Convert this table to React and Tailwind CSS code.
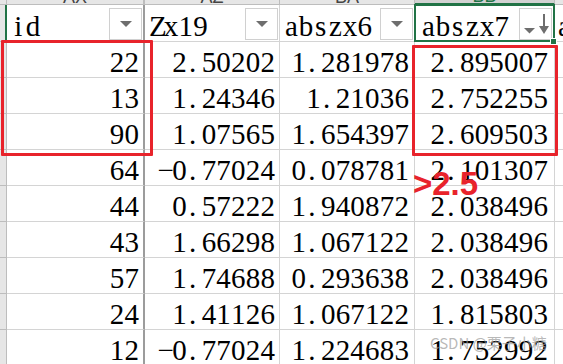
import React from 'react';

const rows = [
  ['22', '2.50202', '1.281978', '2.895007'],
  ['13', '1.24346', '1.21036', '2.752255'],
  ['90', '1.07565', '1.654397', '2.609503'],
  ['64', '−0.77024', '0.078781', '2.101307'],
  ['44', '0.57222', '1.940872', '2.038496'],
  ['43', '1.66298', '1.067122', '2.038496'],
  ['57', '1.74688', '0.293638', '2.038496'],
  ['24', '1.41126', '1.067122', '1.815803'],
  ['12', '−0.77024', '1.224683', '1.752992'],
];

function Mono({ text }) {
  return (
    <span className="inline-flex whitespace-nowrap font-['Liberation_Serif']">
      {Array.from(text).map((ch, i) => (
        <span
          key={i}
          className={ch === '.' ? 'inline-block w-[14.7px] text-left pl-[2px]' : 'inline-block w-[14.7px] text-center'}
        >
          {ch}
        </span>
      ))}
    </span>
  );
}

function FilterBtn() {
  return (
    <div className="ml-auto mr-[1px] mb-[1px] self-end w-[33px] h-[32px] shrink-0 border border-[#d0d0d0] bg-white flex items-center justify-center">
      <svg width="12" height="6" viewBox="0 0 12 6">
        <path d="M0 0 L12 0 L6 6 Z" fill="#6e6e6e" />
      </svg>
    </div>
  );
}

function SortBtn() {
  return (
    <div className="ml-auto mr-[2px] mb-[1px] self-end w-[33px] h-[32px] shrink-0 border border-[#d0d0d0] bg-white">
      <svg width="31" height="30" viewBox="0 0 31 30">
        <path d="M4 19 L15 19 L9.5 24.5 Z" fill="#6e6e6e" />
        <rect x="23" y="5" width="2" height="16" fill="#6e6e6e" />
        <path d="M19 17 L29 17 L24 25 Z" fill="#6e6e6e" />
      </svg>
    </div>
  );
}

const letterStrip = 'h-[5px] overflow-hidden flex items-end justify-center bg-[#e6e6e6] border-b border-r border-[#bdbdbd]';
const letter = "font-['Liberation_Sans'] text-[18px] leading-none text-[#444] mb-[-2px]";

export default function App() {
  return (
    <div className="relative w-[563px] h-[364px] overflow-hidden bg-white font-['Liberation_Serif'] text-black">
      <div className="grid grid-cols-[7px_138px_135px_135px_140px_1fr] grid-rows-[5px_37px_repeat(9,36px)]">
        <div className="bg-[#e6e6e6] border-b border-r border-[#bdbdbd]" />
        <div className="h-[5px] overflow-hidden flex items-end justify-center bg-[#e6e6e6] border-b border-r-2 border-[#bdbdbd]">
          <span className={letter}>AX</span>
        </div>
        <div className={letterStrip}>
          <span className={letter}>AZ</span>
        </div>
        <div className={letterStrip}>
          <span className={letter}>BA</span>
        </div>
        <div className="h-[5px] overflow-hidden flex items-end justify-center bg-[#d2d2d2] border-b-2 border-r border-b-[#217346] border-r-[#bdbdbd]">
          <span className="font-['Liberation_Sans'] text-[18px] leading-none text-[#217346] mb-[-2px]">BB</span>
        </div>
        <div className="bg-[#e6e6e6] border-b border-[#bdbdbd]" />

        <div className="bg-[#e6e6e6] border-b border-b-[#bdbdbd] border-r-2 border-r-[#217346]" />
        <div className="flex items-end pl-[4px] border-b border-r-2 border-b-[#d4d4d4] border-r-[#9c9c9c] text-[29px] leading-[29px]">
          <Mono text="id" />
          <FilterBtn />
        </div>
        <div className="flex items-end pl-[4px] border-b border-r border-[#d4d4d4] text-[29px] leading-[29px]">
          <Mono text="Zx19" />
          <FilterBtn />
        </div>
        <div className="flex items-end pl-[4px] border-b border-r border-[#d4d4d4] text-[29px] leading-[29px]">
          <Mono text="abszx6" />
          <FilterBtn />
        </div>
        <div className="relative flex items-end pl-[6px] border-b border-r border-[#d4d4d4] text-[29px] leading-[29px]">
          <Mono text="abszx7" />
          <SortBtn />
          <div className="absolute -inset-[1px] border-2 border-[#217346]" />
          <div className="absolute -right-[3px] -bottom-[4px] w-[7px] h-[7px] bg-[#217346] border border-white" />
        </div>
        <div className="flex items-end pl-[2px] border-b border-[#d4d4d4] text-[29px] leading-[29px] overflow-hidden whitespace-nowrap">
          <Mono text="abszx8" />
        </div>

        {rows.map((r, i) => (
          <React.Fragment key={i}>
            <div className="bg-[#e6e6e6] border-b border-r border-[#bdbdbd]" />
            <div className="flex items-end justify-end pr-[4px] border-b border-r-2 border-b-[#d4d4d4] border-r-[#9c9c9c] text-[29px] leading-[29px]">
              <Mono text={r[0]} />
            </div>
            <div className="flex items-end justify-end pr-[4px] border-b border-r border-[#d4d4d4] text-[29px] leading-[29px]">
              <Mono text={r[1]} />
            </div>
            <div className="flex items-end justify-end pr-[5px] border-b border-r border-[#d4d4d4] text-[29px] leading-[29px]">
              <Mono text={r[2]} />
            </div>
            <div className="flex items-end justify-end pr-[6px] border-b border-r border-[#d4d4d4] text-[29px] leading-[29px]">
              <Mono text={r[3]} />
            </div>
            <div className="border-b border-[#d4d4d4]" />
          </React.Fragment>
        ))}
      </div>

      <div className="absolute left-[1px] top-[40px] w-[152px] h-[116px] border-[3px] border-[#e8232b] rounded-[1px]" />
      <div className="absolute left-[412px] top-[45px] w-[146px] h-[111px] border-[3px] border-[#e8232b] rounded-[1px]" />
      <div className="absolute left-[413px] top-[167px] font-['Liberation_Sans'] font-bold text-[33px] leading-none text-[#e8232b] whitespace-nowrap">
        &gt;2.5
      </div>

      <div className="absolute left-[430px] top-[335px] font-['Noto_Sans_CJK_SC'] text-[15px] leading-none text-[#9a9a9a]/70 whitespace-nowrap">
        CSDN @栗子小糖
      </div>
    </div>
  );
}
